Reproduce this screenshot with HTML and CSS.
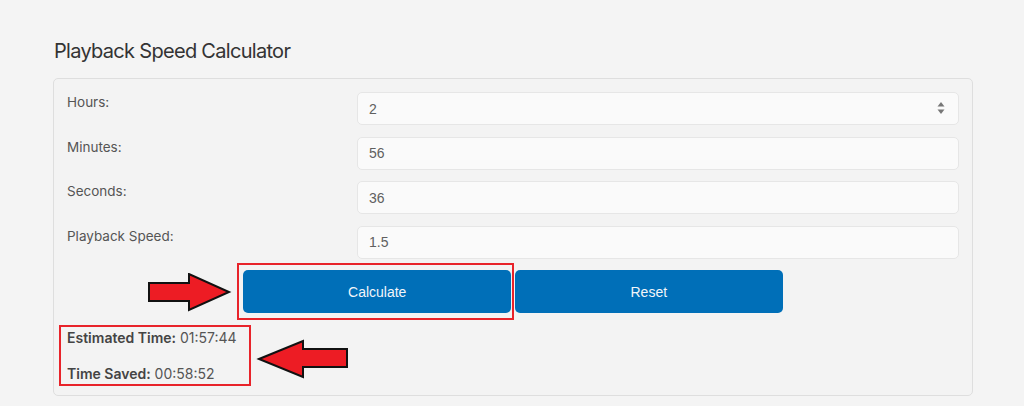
FILE: index.html
```html
<!DOCTYPE html>
<html lang="en">
<head>
<meta charset="utf-8">
<title>Playback Speed Calculator</title>
<link rel="stylesheet" href="styles.css">
</head>
<body>
<main class="page">
  <h2 class="title">Playback Speed Calculator</h2>
  <section class="card">
    <div class="form">
      <label class="label" for="h">Hours:</label>
      <div class="field">
        <input class="input" id="h" type="text" value="2">
        <svg class="spinner" width="8" height="14" viewBox="0 0 8 14" aria-hidden="true">
          <path d="M4 1 L7.5 5.5 L0.5 5.5 Z" fill="#777"/>
          <path d="M4 13 L7.5 8.5 L0.5 8.5 Z" fill="#777"/>
        </svg>
      </div>
      <label class="label" for="m">Minutes:</label>
      <div class="field"><input class="input" id="m" type="text" value="56"></div>
      <label class="label" for="s">Seconds:</label>
      <div class="field"><input class="input" id="s" type="text" value="36"></div>
      <label class="label" for="p">Playback Speed:</label>
      <div class="field"><input class="input" id="p" type="text" value="1.5"></div>
    </div>
    <div class="actions">
      <button class="btn" type="button">Calculate</button>
      <button class="btn" type="button">Reset</button>
    </div>
    <div class="results">
      <p class="result"><strong>Estimated Time:</strong> 01:57:44</p>
      <p class="result"><strong>Time Saved:</strong> 00:58:52</p>
    </div>

    <div class="mark mark-calc"></div>
    <div class="mark mark-results"></div>
    <svg class="arrow arrow-right" width="84" height="40" viewBox="0 0 84 40" aria-hidden="true">
      <polygon points="1,10 41,10 41,1 81,19 41,37 41,28 1,28" fill="#ed1c24" stroke="#111" stroke-width="2" stroke-linejoin="miter"/>
    </svg>
    <svg class="arrow arrow-left" width="94" height="42" viewBox="0 0 94 42" aria-hidden="true">
      <polygon points="3,21 47,3 47,11 91,11 91,29 47,29 47,39" fill="#ed1c24" stroke="#111" stroke-width="2" stroke-linejoin="miter"/>
    </svg>
  </section>
</main>
</body>
</html>
```

FILE: styles.css
```css
* { box-sizing: border-box; }

html, body {
  margin: 0;
  padding: 0;
  background: #f4f4f4;
}

body {
  font-family: Inter, "Noto Sans", "Liberation Sans", sans-serif;
  color: #555;
}

.page {
  padding: 38px 51px 0 53px;
}

.title {
  margin: 0 0 14px 1px;
  font-size: 20px;
  line-height: 26px;
  font-weight: 400;
  color: #333;
  letter-spacing: -0.7px;
}

.card {
  position: relative;
  width: 920px;
  border: 1px solid #dedede;
  border-radius: 5px;
  padding: 13px 13px 11px 13px;
  background: #f3f3f3;
}

.form {
  display: grid;
  grid-template-columns: 290px 1fr;
  row-gap: 11.5px;
}

.label {
  font-size: 13.5px;
  line-height: 20px;
  color: #555;
}

.field {
  position: relative;
}

.input {
  display: block;
  width: 100%;
  height: 33px;
  margin: 0;
  padding: 0 11px;
  border: 1px solid #e6e6e6;
  border-radius: 5px;
  background: #fafafa;
  font-family: "Liberation Sans", Arial, sans-serif;
  font-size: 14px;
  color: #606060;
  outline: none;
}

.spinner {
  position: absolute;
  right: 14px;
  top: 9px;
}

.actions {
  display: flex;
  justify-content: center;
  gap: 4px;
  margin-top: 11.5px;
}

.btn {
  width: 30%;
  height: 43px;
  margin: 0;
  border: 0;
  border-radius: 5px;
  background: #006fb8;
  color: #f2f6fa;
  font-family: "Liberation Sans", Arial, sans-serif;
  font-size: 14px;
}

.results {
  margin-top: 15px;
}

.result {
  margin: 0;
  font-size: 14px;
  line-height: 20px;
  color: #555;
}

.result + .result {
  margin-top: 16px;
}

.result strong {
  color: #444;
  font-weight: 600;
}

.mark {
  position: absolute;
  border: 2px solid #e8232a;
}

.mark-calc {
  left: 183px;
  top: 184px;
  width: 277px;
  height: 57px;
}

.mark-results {
  left: 5px;
  top: 246px;
  width: 192px;
  height: 61px;
}

.arrow {
  position: absolute;
  display: block;
}

.arrow-right {
  left: 94px;
  top: 194px;
}

.arrow-left {
  left: 202px;
  top: 259px;
}
```
